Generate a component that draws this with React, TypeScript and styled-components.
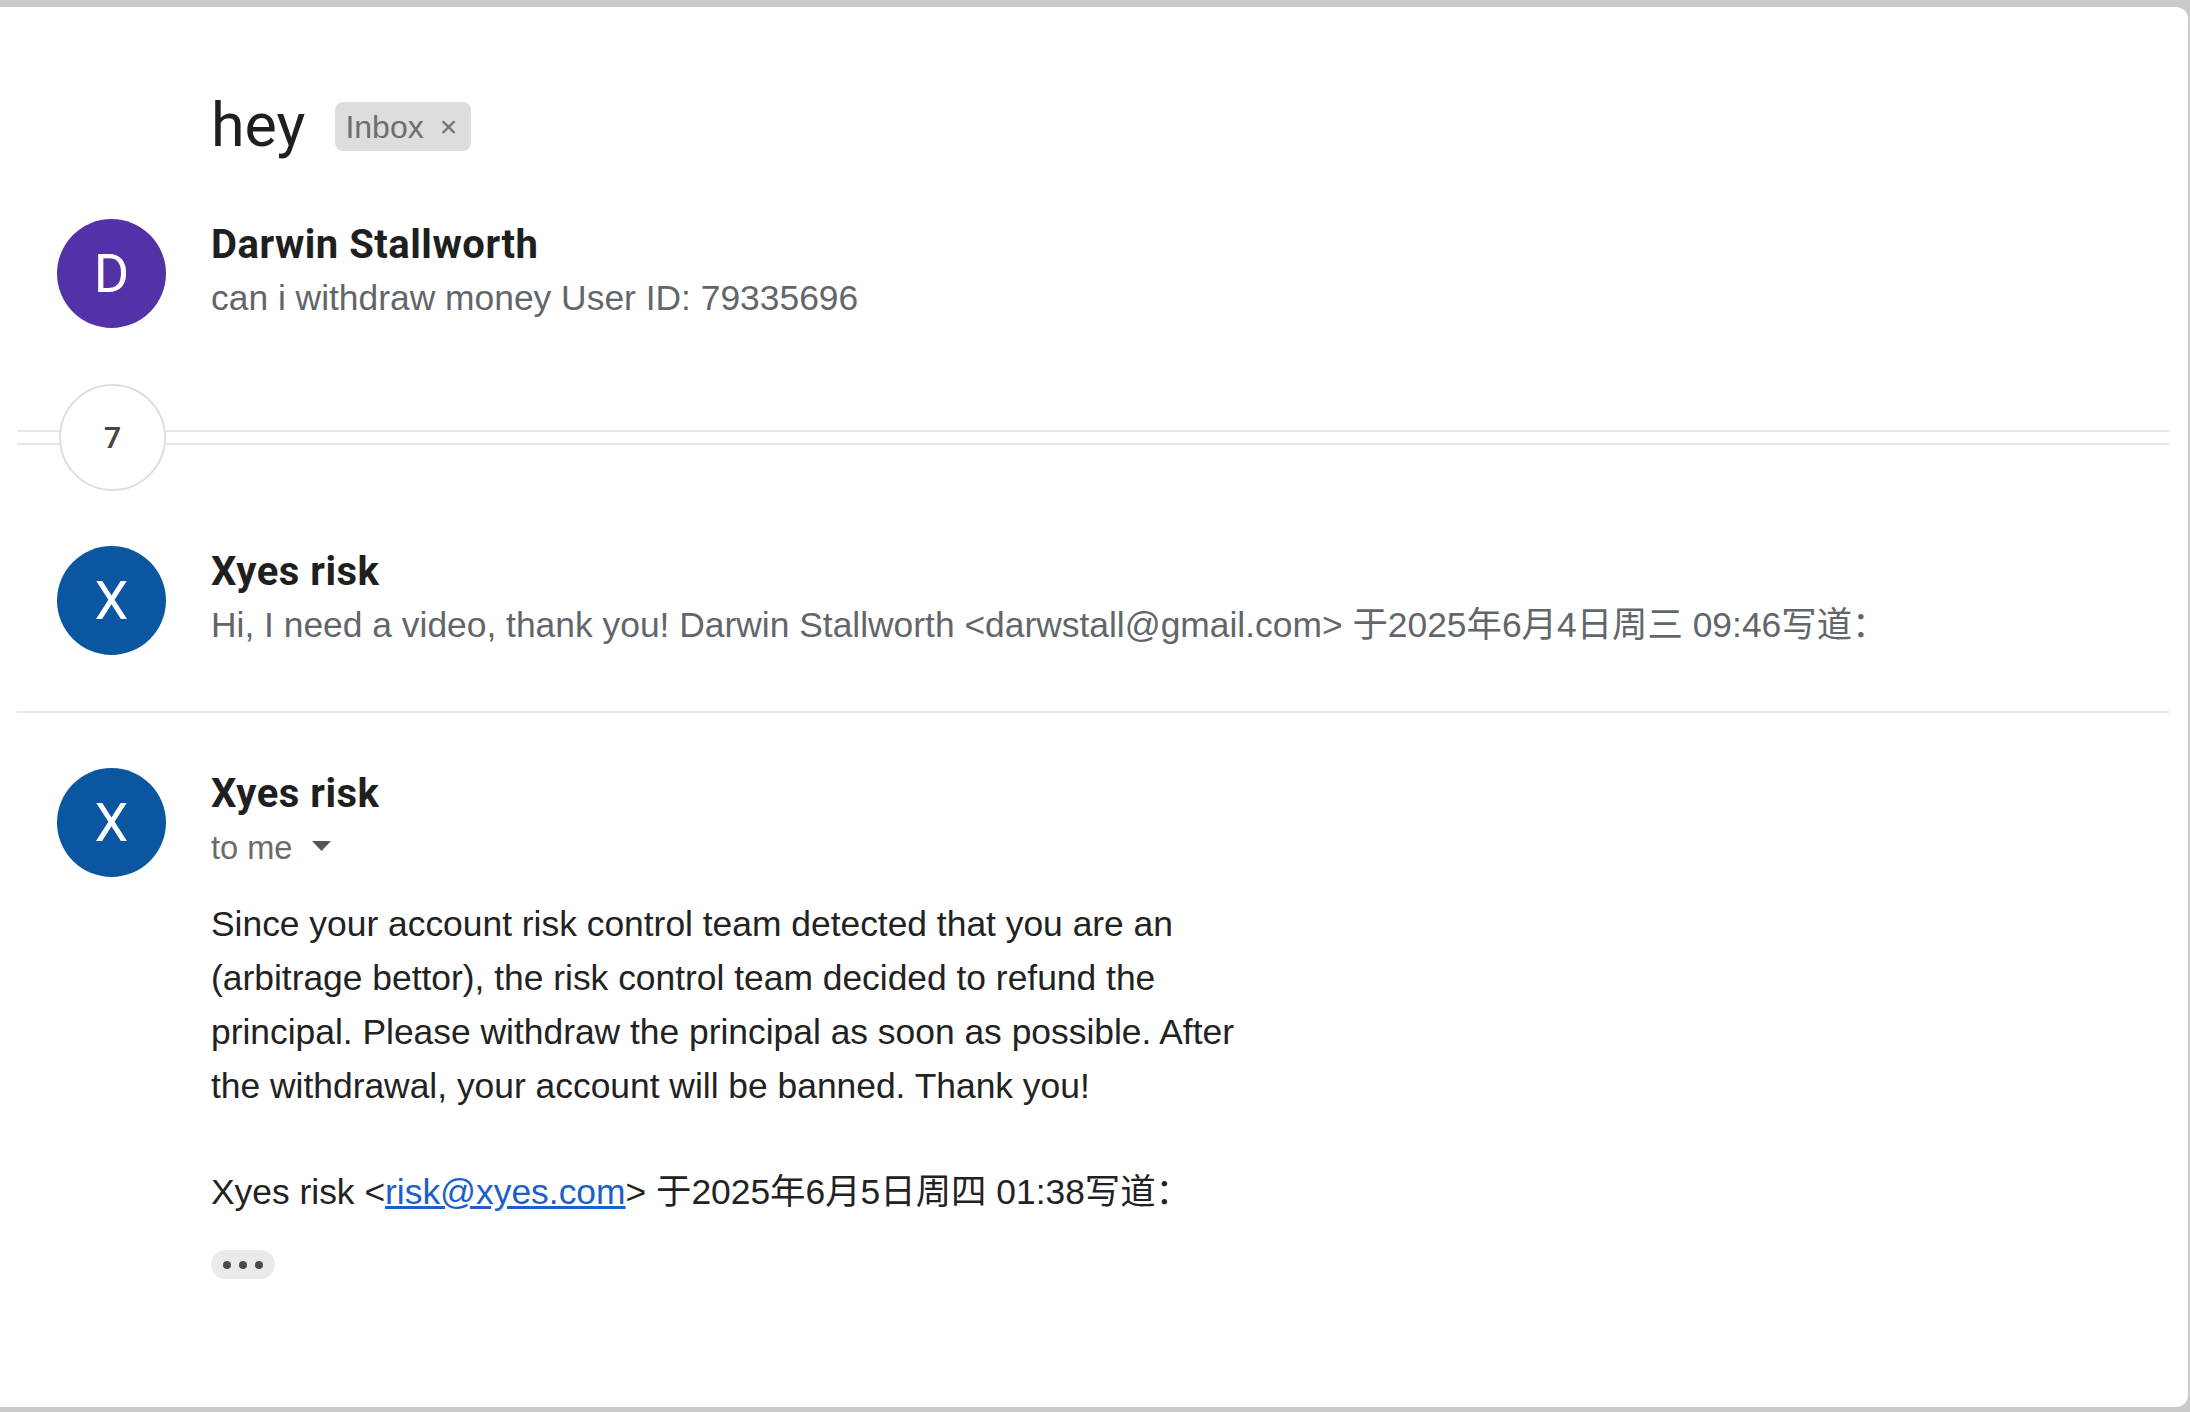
import React from "react";
import styled, { createGlobalStyle } from "styled-components";

const GlobalStyle = createGlobalStyle`
  html, body {
    margin: 0;
    padding: 0;
    background: #cbcbcb;
  }
  body {
    font-family: "Liberation Sans", Arial, "Noto Sans CJK SC", sans-serif;
    -webkit-font-smoothing: antialiased;
  }
  * { box-sizing: border-box; }
`;

const Card = styled.main`
  margin: 7px 2px 0 0;
  height: 1400px;
  background: #ffffff;
  border-radius: 0 12px 12px 0;
  padding-top: 81.5px;
  overflow: hidden;
`;

const TitleRow = styled.header`
  display: flex;
  align-items: center;
  gap: 30px;
  height: 72px;
  padding-left: 211px;
`;

const Subject = styled.h1`
  margin: 0;
  font: 400 61px/72px Roboto, "Liberation Sans", sans-serif;
  color: #1f1f1f;
`;

const Chip = styled.span`
  display: inline-flex;
  align-items: center;
  gap: 16px;
  height: 49px;
  margin-top: 4px;
  padding: 0 14px 0 10px;
  border-radius: 8px;
  background: #dddddd;
  color: #6e6e6e;
  font: 400 32px/1 "Liberation Sans", Arial, sans-serif;
`;

const ChipClose = styled.span`
  font-size: 30px;
  color: #707070;
`;

const MessageRow = styled.article<{ $gap: number }>`
  display: flex;
  align-items: flex-start;
  gap: 45px;
  margin-top: ${(p) => p.$gap}px;
  padding-left: 57px;
  padding-right: 17px;
`;

const Avatar = styled.div<{ $bg: string }>`
  flex: none;
  width: 109px;
  height: 109px;
  border-radius: 50%;
  background: ${(p) => p.$bg};
  color: #ffffff;
  display: flex;
  align-items: center;
  justify-content: center;
  font: 400 54px/1 Roboto, "Liberation Sans", sans-serif;
`;

const Content = styled.div`
  padding-top: 2px;
  min-width: 0;
`;

const SenderName = styled.div`
  font: 700 40px/48px Roboto, "Liberation Sans", sans-serif;
  letter-spacing: 0.5px;
  color: #1f1f1f;
`;

const Snippet = styled.div`
  margin-top: 4px;
  font: 400 35.4px/50px "Liberation Sans", Arial, "Noto Sans CJK SC", sans-serif;
  color: #62666a;
  white-space: nowrap;
`;

const CountRow = styled.div<{ $gap: number }>`
  display: flex;
  align-items: center;
  height: 107px;
  margin-top: ${(p) => p.$gap}px;
  padding: 0 19px 0 17px;
`;

const RuleBand = styled.div<{ $width?: number }>`
  height: 15px;
  border-top: 2px solid #e6e6e6;
  border-bottom: 2px solid #e6e6e6;
  flex: ${(p) => (p.$width ? `0 0 ${p.$width}px` : "1 1 auto")};
`;

const CountBubble = styled.div`
  flex: none;
  width: 107px;
  height: 107px;
  border-radius: 50%;
  border: 2px solid #dedede;
  background: #ffffff;
  display: flex;
  align-items: center;
  justify-content: center;
  font: 600 30px/1 Roboto, "Liberation Sans", sans-serif;
  color: #474747;
`;

const Divider = styled.hr<{ $gap: number }>`
  margin: ${(p) => p.$gap}px 19px 0 17px;
  border: 0;
  height: 2px;
  background: #e8e8e8;
`;

const Recipient = styled.div`
  margin-top: 8px;
  display: flex;
  align-items: center;
  height: 44px;
  font: 400 32.6px/44px "Liberation Sans", Arial, sans-serif;
  color: #6b6b6b;
`;

const Caret = styled.svg`
  margin-left: 20px;
  margin-top: -4px;
  flex: none;
`;

const Body = styled.p`
  margin: 27px 0 0 0;
  font: 400 35.4px/54px "Liberation Sans", Arial, "Noto Sans CJK SC", sans-serif;
  color: #222222;
  white-space: nowrap;
`;

const Quote = styled.p`
  margin: 52px 0 0 0;
  font: 400 35.4px/54px "Liberation Sans", Arial, "Noto Sans CJK SC", sans-serif;
  color: #222222;
  white-space: nowrap;
`;

const MailLink = styled.a`
  color: #1a5fcc;
  text-decoration: underline;
`;

const ExpandButton = styled.button`
  margin-top: 31px;
  width: 64px;
  height: 29px;
  border: 0;
  padding: 0;
  border-radius: 15px;
  background: #e8eaed;
  display: flex;
  align-items: center;
  justify-content: center;
  gap: 8px;
`;

const Dot = styled.span`
  width: 8px;
  height: 8px;
  border-radius: 50%;
  background: #4a4a4a;
`;

export default function App() {
  return (
    <>
      <GlobalStyle />
      <Card>
        <TitleRow>
          <Subject>hey</Subject>
          <Chip>
            Inbox
            <ChipClose>×</ChipClose>
          </Chip>
        </TitleRow>

        <MessageRow $gap={58.5}>
          <Avatar $bg="#5331a7">D</Avatar>
          <Content>
            <SenderName>Darwin Stallworth</SenderName>
            <Snippet>can i withdraw money User ID: 79335696</Snippet>
          </Content>
        </MessageRow>

        <CountRow $gap={56}>
          <RuleBand $width={42} />
          <CountBubble>7</CountBubble>
          <RuleBand />
        </CountRow>

        <MessageRow $gap={55}>
          <Avatar $bg="#0b56a0">X</Avatar>
          <Content>
            <SenderName>Xyes risk</SenderName>
            <Snippet>
              Hi, I need a video, thank you! Darwin Stallworth &lt;darwstall@gmail.com&gt; 于2025年6月4日周三 09:46写道：
            </Snippet>
          </Content>
        </MessageRow>

        <Divider $gap={56} />

        <MessageRow $gap={55}>
          <Avatar $bg="#0b56a0">X</Avatar>
          <Content>
            <SenderName>Xyes risk</SenderName>
            <Recipient>
              to me
              <Caret width="19" height="10" viewBox="0 0 19 10" aria-hidden="true">
                <polygon points="0,0 19,0 9.5,10" fill="#555555" />
              </Caret>
            </Recipient>
            <Body>
              Since your account risk control team detected that you are an
              <br />
              (arbitrage bettor), the risk control team decided to refund the
              <br />
              principal. Please withdraw the principal as soon as possible. After
              <br />
              the withdrawal, your account will be banned. Thank you!
            </Body>
            <Quote>
              Xyes risk &lt;<MailLink href="#">risk@xyes.com</MailLink>&gt; 于2025年6月5日周四 01:38写道：
            </Quote>
            <ExpandButton type="button" aria-label="Show trimmed content">
              <Dot />
              <Dot />
              <Dot />
            </ExpandButton>
          </Content>
        </MessageRow>
      </Card>
    </>
  );
}
